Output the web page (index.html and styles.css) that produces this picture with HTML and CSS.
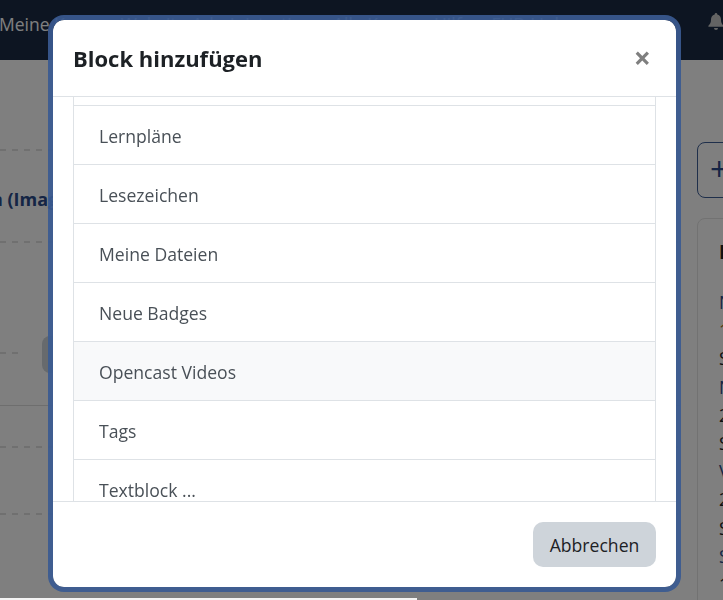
FILE: index.html
```html
<!DOCTYPE html>
<html lang="de">
<head>
<meta charset="utf-8">
<title>Block hinzufügen</title>
<link rel="stylesheet" href="styles.css">
</head>
<body>
<div class="page">
  <header class="navbar">
    <span class="nav-item">Meine Kurse</span>
    <span class="nav-item">Website-Administration</span>
    <span class="nav-item">Alle Kurse</span>
    <span class="nav-item">Hilfe</span>
    <span class="nav-item">FUB-Links</span>
    <svg class="bell" viewBox="0 0 16 18"><path d="M8 0a1.4 1.4 0 0 0-1.3 1.5C4 2.1 3 4.300 3 6.800c0 3-1 4.400-2.600 6v1h15.200v-1C14 11.200 13 9.800 13 6.800c0-2.500-1-4.700-3.700-5.300A1.400 1.400 0 0 0 8 0zM6 15h4a2 2 0 0 1-4 0z" fill="#c9c9c9"/></svg>
  </header>
  <main class="content">
    <div class="left">
      <div class="dash d1"></div>
      <div class="course-title">Navigation (Image)</div>
      <div class="dash d5"></div>
      <div class="dash d2"></div>
      <div class="pill"></div>
      <div class="rule"></div>
      <div class="dash d3"></div>
      <div class="dash d4"></div>
    </div>
    <aside class="right">
      <div class="add-btn">+</div>
      <div class="card">
        <div class="card-title">K</div>
        <div class="l link">N</div>
        <div class="l date">1</div>
        <div class="l">S</div>
        <div class="l link">N</div>
        <div class="l">2</div>
        <div class="l">S</div>
        <div class="l link">V</div>
        <div class="l">2</div>
        <div class="l">S</div>
        <div class="l link">S</div>
        <div class="l">1</div>
      </div>
    </aside>
  </main>
</div>
<div class="backdrop"></div>
<div class="scrollbar"></div>
<div class="modal" role="dialog">
  <div class="modal-head">
    <h2 class="modal-title">Block hinzufügen</h2>
    <span class="close">×</span>
  </div>
  <div class="modal-body">
    <ul class="list">
      <li class="item stub"></li>
      <li class="item">Lernpläne</li>
      <li class="item">Lesezeichen</li>
      <li class="item">Meine Dateien</li>
      <li class="item">Neue Badges</li>
      <li class="item hover">Opencast Videos</li>
      <li class="item">Tags</li>
      <li class="item">Textblock ...</li>
    </ul>
  </div>
  <div class="modal-foot">
    <button class="cancel">Abbrechen</button>
  </div>
</div>
</body>
</html>
```
FILE: styles.css
```css
* { box-sizing: border-box; }
html, body { margin: 0; height: 100%; overflow: hidden; }
body { font-family: "Open Sans", "Noto Sans", "Liberation Sans", sans-serif; background: #fff; color: #1d2125; }
.page { width: 723px; height: 600px; display: flex; flex-direction: column; overflow: hidden; }
.navbar { height: 60px; background: #1a2a44; display: flex; align-items: flex-start; padding-top: 12px; font-size: 17.500px; color: #fff; position: relative; flex: none; }
.nav-item { white-space: nowrap; margin-right: 20px; }
.nav-item:first-child { margin-left: -1px; }
.bell { position: absolute; left: 708px; top: 12px; width: 16px; height: 20px; }
.content { flex: 1; display: flex; background: #fff; position: relative; overflow: hidden; }
.left { width: 680px; position: relative; flex: none; }
.dash { position: absolute; left: 0; width: 100%; height: 2px; background: repeating-linear-gradient(90deg, #e0e0e0 0 6px, transparent 6px 12px); }
.d1 { top: 89px; } .d5 { top: 181px; } .d2 { top: 292px; width: 22px; } .d3 { top: 386px; } .d4 { top: 453px; }
.rule { position: absolute; left: 0; top: 345px; width: 100%; border-top: 1px solid #dcdcdc; }
.course-title { position: absolute; right: 605px; top: 127px; font-weight: 700; font-size: 18px; color: #2a4a8a; white-space: nowrap; }
.pill { position: absolute; left: 42px; top: 276px; width: 40px; height: 37px; background: #ced4da; border-radius: 8px; }
.right { flex: 1; position: relative; }
.add-btn { position: absolute; left: 17px; top: 82px; width: 60px; height: 56px; border: 1px solid #3f5f96; border-radius: 8px; color: #2a4a8a; font-size: 32px; padding-left: 12px; line-height: 52px; }
.card { position: absolute; left: 17px; top: 158px; width: 60px; height: 430px; border: 1px solid #e4e4e4; border-radius: 8px; padding: 20px 0 0 21px; font-size: 17.500px; }
.card-title { font-weight: 700; font-size: 19px; height: 51px; color: #1d2125; }
.l { height: 28.200px; line-height: 24px; color: #1d2125; }
.l.link { color: #2a4a8a; }
.l.date { color: #a8741a; }
.scrollbar { position: fixed; left: 0; top: 598px; width: 417px; height: 2px; background: #f4f4f4; }
.backdrop { position: fixed; inset: 0; background: rgba(0,0,0,.5); }
.modal { position: fixed; left: 48px; top: 15px; width: 633px; height: 577px; border: 5px solid rgba(57,90,145,.92); border-radius: 16px; background: #fff; background-clip: padding-box; display: flex; flex-direction: column; overflow: hidden; }
.modal-head { height: 77px; flex: none; display: flex; align-items: center; justify-content: space-between; padding: 0 25px 0 20px; border-bottom: 1px solid #dee2e6; }
.modal-title { margin: 0; font-size: 22px; font-weight: 700; color: #1d2125; line-height: 1.2; }
.close { font-size: 30px; font-weight: 700; color: #7f7f7f; line-height: 1; }
.modal-body { flex: 1; overflow: hidden; padding: 0 20px; min-height: 0; }
.list { list-style: none; margin: -50px 0 0; padding: 0; border-left: 1px solid #dee2e6; border-right: 1px solid #dee2e6; }
.item { height: 59px; border-bottom: 1px solid #dee2e6; padding: 0 25px; font-size: 17.600px; line-height: 60px; color: #495057; }
.item.hover { background: #f8f9fa; }
.modal-foot { height: 86px; flex: none; border-top: 1px solid #dee2e6; display: flex; align-items: center; justify-content: flex-end; padding: 0 20px; }
.cancel { width: 123px; height: 45px; border: 0; border-radius: 10px; background: #ced4da; color: #1d2125; font: 17.600px "Open Sans", "Noto Sans", sans-serif; }
```
